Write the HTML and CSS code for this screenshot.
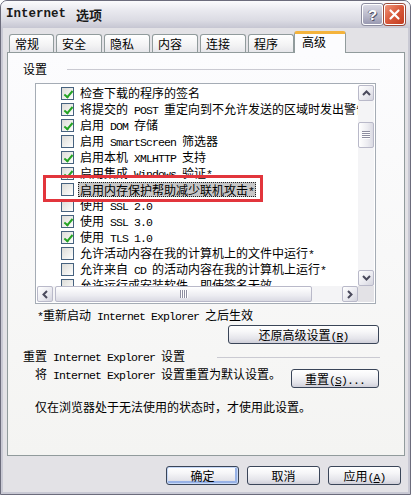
FILE: index.html
```html
<!DOCTYPE html>
<html lang="zh-CN">
<head>
<meta charset="utf-8">
<title>Internet 选项</title>
<link rel="stylesheet" href="styles.css">
</head>
<body>
<div class="window">
  <div class="titlebar">
    <div class="title"><span class="t-en">Internet</span><span class="t-cjk">选项</span></div>
    <div class="caption-btns">
      <span class="cap-btn help">?</span>
      <span class="cap-btn close"><svg width="13" height="13" viewBox="0 0 13 13"><path d="M2.5 2.5 L10.5 10.5 M10.5 2.5 L2.5 10.5" stroke="#fff" stroke-width="2.2" stroke-linecap="round"/></svg></span>
    </div>
  </div>
  <div class="client">
    <div class="tabs">
      <span class="tab first">常规</span>
      <span class="tab">安全</span>
      <span class="tab">隐私</span>
      <span class="tab">内容</span>
      <span class="tab">连接</span>
      <span class="tab">程序</span>
      <span class="tab active">高级</span>
    </div>
    <div class="panel">
      <div class="group-head"><span>设置</span><i class="rule r1"></i></div>
      <div class="listbox">
        <div class="lb-main">
          <div class="rows">
            <div class="row"><span class="cb on"></span><span class="lbl">检查下载的程序的签名</span></div>
            <div class="row"><span class="cb on"></span><span class="lbl">将提交的<span class="en"> POST </span>重定向到不允许发送的区域时发出警告</span></div>
            <div class="row"><span class="cb on"></span><span class="lbl">启用<span class="en"> DOM </span>存储</span></div>
            <div class="row"><span class="cb"></span><span class="lbl">启用<span class="en"> SmartScreen </span>筛选器</span></div>
            <div class="row"><span class="cb on"></span><span class="lbl">启用本机<span class="en"> XMLHTTP </span>支持</span></div>
            <div class="row"><span class="cb on"></span><span class="lbl">启用集成<span class="en"> Windows </span>验证<span class="en">*</span></span></div>
            <div class="row"><span class="cb"></span><span class="lbl sel">启用内存保护帮助减少联机攻击<span class="en">*</span></span></div>
            <div class="row"><span class="cb"></span><span class="lbl">使用<span class="en"> SSL 2.0</span></span></div>
            <div class="row"><span class="cb on"></span><span class="lbl">使用<span class="en"> SSL 3.0</span></span></div>
            <div class="row"><span class="cb on"></span><span class="lbl">使用<span class="en"> TLS 1.0</span></span></div>
            <div class="row"><span class="cb"></span><span class="lbl">允许活动内容在我的计算机上的文件中运行<span class="en">*</span></span></div>
            <div class="row"><span class="cb"></span><span class="lbl">允许来自<span class="en"> CD </span>的活动内容在我的计算机上运行<span class="en">*</span></span></div>
            <div class="row"><span class="cb"></span><span class="lbl">允许运行或安装软件，即使签名无效</span></div>
          </div>
          <div class="vscroll">
            <span class="sb-btn"><svg width="9" height="6" viewBox="0 0 9 6"><path d="M1 5 L4.5 1.5 L8 5" fill="none" stroke="#4a4a5c" stroke-width="2"/></svg></span>
            <div class="sb-track v"><span class="thumb v"><i class="grip-h"></i></span></div>
            <span class="sb-btn"><svg width="9" height="6" viewBox="0 0 9 6"><path d="M1 1 L4.5 4.5 L8 1" fill="none" stroke="#4a4a5c" stroke-width="2"/></svg></span>
          </div>
        </div>
        <div class="lb-bottom">
          <div class="hscroll">
            <span class="sb-btn"><svg width="6" height="9" viewBox="0 0 6 9"><path d="M5 1 L1.5 4.5 L5 8" fill="none" stroke="#4a4a5c" stroke-width="2"/></svg></span>
            <div class="sb-track h"><span class="thumb h"><i class="grip-v"></i></span></div>
            <span class="sb-btn"><svg width="6" height="9" viewBox="0 0 6 9"><path d="M1 1 L4.5 4.5 L1 8" fill="none" stroke="#4a4a5c" stroke-width="2"/></svg></span>
          </div>
          <div class="corner"></div>
        </div>
        <div class="annot"></div>
      </div>
      <div class="note"><span class="en">*</span>重新启动<span class="en"> Internet Explorer </span>之后生效</div>
      <div class="restore-row"><button class="btn restore">还原高级设置<span class="en">(<u>R</u>)</span></button></div>
      <div class="group-head g2"><span>重置<span class="en"> Internet Explorer </span>设置</span><i class="rule r2"></i></div>
      <div class="reset-row">
        <span class="reset-text">将<span class="en"> Internet Explorer </span>设置重置为默认设置。</span>
        <button class="btn reset">重置<span class="en">(<u>S</u>)...</span></button>
      </div>
      <div class="warn">仅在浏览器处于无法使用的状态时，才使用此设置。</div>
    </div>
    <div class="dlg-btns">
      <button class="btn dlg default">确定</button>
      <button class="btn dlg">取消</button>
      <button class="btn dlg">应用<span class="en">(<u>A</u>)</span></button>
    </div>
  </div>
</div>
</body>
</html>
```
FILE: styles.css
```css
* { box-sizing: border-box; }
html, body { margin: 0; padding: 0; }
body {
  width: 411px;
  height: 495px;
  overflow: hidden;
  font-family: "Noto Sans CJK SC", sans-serif;
  font-size: 12px;
  color: #000;
  background: #fff;
}
.en {
  font-family: "Liberation Mono", "Noto Sans CJK SC", monospace;
  font-size: 11.5px;
  letter-spacing: -0.9px;
}
u { text-decoration: underline; }

.window {
  width: 411px;
  height: 495px;
  display: flex;
  flex-direction: column;
  border: 1px solid #6c6c7c;
  border-radius: 7px 7px 0 0;
  background: #c9c9d4;
  padding: 0 2px 2px;
  overflow: hidden;
}

/* title bar */
.titlebar {
  height: 27px;
  margin: 0 -2px;
  flex: none;
  display: flex;
  justify-content: space-between;
  align-items: flex-start;
  padding: 3px 5px 0 5px;
  background: linear-gradient(#fbfbfd 0%, #e9e9ef 35%, #dcdce4 70%, #c6c6d2 100%);
}
.title {
  display: flex;
  align-items: center;
  height: 20px;
  font-weight: bold;
  color: #1a1a1a;
}
.t-en {
  font-family: "Liberation Mono", monospace;
  font-size: 12.5px;
  font-weight: bold;
}
.t-cjk {
  font-size: 13px;
  font-weight: bold;
  margin-left: 10px;
}
.caption-btns { display: flex; gap: 1px; }
.cap-btn {
  width: 21px;
  height: 21px;
  border-radius: 3px;
  border: 1px solid #ffffff;
  box-shadow: 0 0 0 1px #8d8d9f;
  display: flex;
  align-items: center;
  justify-content: center;
}
.cap-btn.help {
  background: linear-gradient(#d9d9e4, #b9b9ca 55%, #9a9ab2);
  color: #fff;
  font-family: "Liberation Sans", sans-serif;
  font-weight: bold;
  font-size: 15px;
  text-shadow: 1px 1px 0 #55556a, -1px 0 0 #77778a;
}
.cap-btn.close {
  background: linear-gradient(135deg, #f09479, #d8583a 50%, #c23c20);
  box-shadow: 0 0 0 1px #9a4b3b;
}

/* client */
.client {
  flex: 1;
  display: flex;
  flex-direction: column;
  background: #e3e2e6;
  padding: 3px 3px 0 4px;
}
.tabs {
  height: 21px;
  flex: none;
  display: flex;
  align-items: flex-end;
  gap: 2px;
  padding-left: 2px;
}
.tab {
  width: 46px;
  height: 18px;
  border: 1px solid #919b9c;
  border-bottom: none;
  border-radius: 3px 3px 0 0;
  background: linear-gradient(#ffffff, #f3f3f4 60%, #e6e6ea);
  padding: 2px 0 0 5px;
  line-height: 14px;
}
.tab.first { width: 45px; }
.tab.active {
  width: 52px;
  height: 22px;
  margin-left: -2px;
  margin-bottom: -1px;
  position: relative;
  z-index: 1;
  background: #fcfcfe;
  border-top: 3px solid #f4b33c;
  padding: 1px 0 0 7px;
}

.panel {
  height: 404px;
  flex: none;
  border: 1px solid #919b9c;
  background: linear-gradient(#fcfcfe, #f4f4f2);
  padding: 9px 24px 0 15px;
  display: flex;
  flex-direction: column;
}
.group-head {
  height: 14px;
  line-height: 14px;
  display: flex;
  align-items: center;
  white-space: nowrap;
}
.rule {
  flex: 1;
  height: 1px;
  background: #cacad2;
}
.r1 { margin-left: 20px; }
.r2 { margin-left: 32px; }

/* listbox */
.listbox {
  margin: 7px 4px 0 12px;
  height: 221px;
  flex: none;
  border: 1px solid #a5acb5;
  padding: 1px;
  background: #fff;
  position: relative;
  display: flex;
  flex-direction: column;
}
.lb-main { display: flex; height: 201px; }
.rows { flex: 1; overflow: hidden; }
.row {
  height: 16px;
  display: flex;
  align-items: flex-start;
  padding-left: 24px;
  white-space: nowrap;
}
.cb {
  width: 13px;
  height: 13px;
  flex: none;
  margin-top: 2px;
  margin-right: 6px;
  border: 1px solid #46627f;
  background: linear-gradient(135deg, #dcdcd8, #f4f4f2 70%, #ffffff);
  position: relative;
}
.cb.on::after {
  content: "";
  position: absolute;
  left: 3.5px;
  top: 0.5px;
  width: 3px;
  height: 7px;
  border: solid #24a324;
  border-width: 0 2px 2px 0;
  transform: rotate(40deg);
}
.lbl { line-height: 16px; }
.lbl.sel {
  line-height: 15px;
  height: 15px;
  margin-top: 1px;
  margin-left: -2px;
  padding: 0 2px;
  background: #c6c6c6;
  outline: 1px dotted #222;
  outline-offset: -1px;
}

/* scrollbars */
.vscroll {
  width: 16px;
  flex: none;
  display: flex;
  flex-direction: column;
  background: #f4f4f6;
}
.sb-btn {
  width: 16px;
  height: 16px;
  flex: none;
  border: 1px solid #b9b9c9;
  border-radius: 2px;
  background: linear-gradient(135deg, #ffffff, #e9e9ef 60%, #d4d4de);
  display: flex;
  align-items: center;
  justify-content: center;
}
.sb-track { flex: 1; display: flex; }
.sb-track.v { flex-direction: column; padding-top: 21px; }
.sb-track.h { padding-left: 2px; }
.thumb {
  border: 1px solid #b9b9c9;
  border-radius: 2px;
  background: linear-gradient(90deg, #ffffff, #ececf1 60%, #dadae3);
  display: flex;
  align-items: center;
  justify-content: center;
}
.thumb.v { height: 26px; width: 16px; }
.thumb.h {
  width: 257px;
  height: 16px;
  background: linear-gradient(#ffffff, #ececf1 60%, #dadae3);
}
.grip-h {
  width: 8px;
  height: 8px;
  background: repeating-linear-gradient(#8e8ea0 0 1px, #ffffff 1px 2px);
}
.grip-v {
  width: 8px;
  height: 8px;
  background: repeating-linear-gradient(90deg, #8e8ea0 0 1px, #ffffff 1px 2px);
}
.lb-bottom { display: flex; height: 16px; }
.hscroll { flex: 1; display: flex; background: #f4f4f6; }
.corner { width: 16px; background: #e3e2e6; }

.annot {
  position: absolute;
  left: 7px;
  top: 91px;
  width: 220px;
  height: 27px;
  border: 3px solid #e2353c;
}

/* lower section */
.note {
  margin: 4px 0 0 14px;
  height: 14px;
  line-height: 14px;
  white-space: nowrap;
}
.restore-row {
  display: flex;
  justify-content: flex-end;
  margin-top: 3px;
  padding-right: 1px;
}
.btn {
  height: 19px;
  border: 1px solid #3a4558;
  border-radius: 3px;
  background: linear-gradient(#ffffff, #f6f6f8 35%, #e4e4ea 75%, #cfcfd9);
  font-family: "Noto Sans CJK SC", sans-serif;
  font-size: 12px;
  color: #000;
  padding: 0;
  line-height: 17px;
  white-space: nowrap;
}
.btn.restore { width: 151px; }
.g2 { margin-top: 6px; }
.reset-row {
  display: flex;
  justify-content: space-between;
  align-items: flex-start;
  margin-top: 4px;
  padding: 0 1px 0 12px;
  height: 20px;
}
.reset-text { line-height: 14px; margin-top: -1px; white-space: nowrap; }
.btn.reset { width: 88px; margin-top: 1px; }
.warn {
  margin-top: 12px;
  padding-left: 12px;
  height: 14px;
  line-height: 14px;
  white-space: nowrap;
}

.dlg-btns {
  display: flex;
  justify-content: flex-end;
  gap: 8px;
  margin-top: 10px;
  margin-right: 4px;
}
.btn.dlg { width: 73px; }
.btn.default {
  box-shadow: inset 0 0 0 1px #c6d8f6, inset -1px -1px 0 2px #98b2e6;
}
```
